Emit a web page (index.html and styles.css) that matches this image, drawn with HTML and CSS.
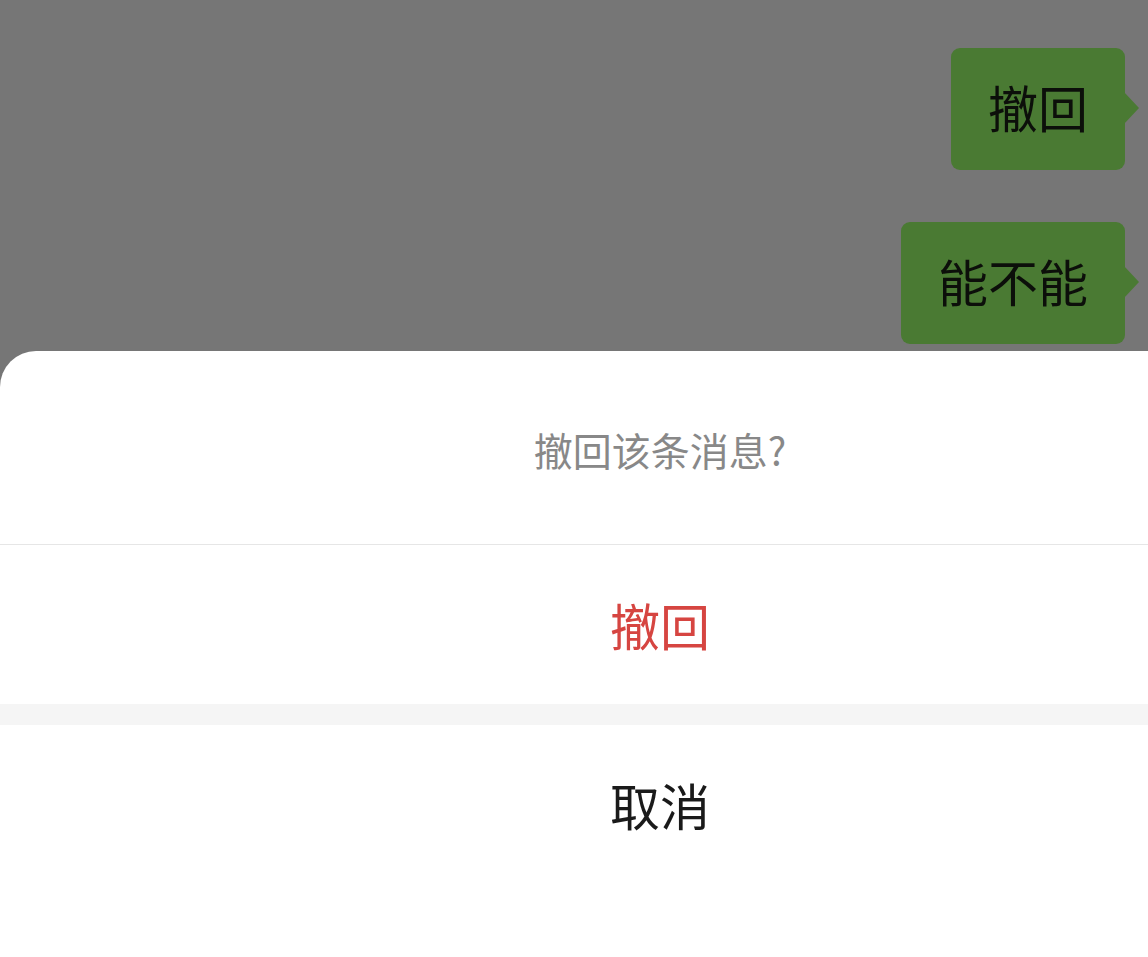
FILE: index.html
```html
<!DOCTYPE html>
<html lang="zh-CN">
<head>
<meta charset="utf-8">
<title>撤回该条消息</title>
<link rel="stylesheet" href="styles.css">
</head>
<body>
<div class="screen">
  <div class="chat">
    <div class="msg">
      <div class="bubble">撤回</div>
    </div>
    <div class="msg">
      <div class="bubble">能不能</div>
    </div>
  </div>
  <div class="sheet">
    <div class="title">撤回该条消息?</div>
    <div class="action danger">撤回</div>
    <div class="spacer"></div>
    <div class="action cancel">取消</div>
  </div>
</div>
</body>
</html>
```
FILE: styles.css
```css
* { box-sizing: border-box; }
html, body {
  margin: 0;
  padding: 0;
}
body {
  width: 1148px;
  height: 957px;
  overflow: hidden;
  background: #767676;
  font-family: "Noto Sans CJK SC", "Noto Sans", sans-serif;
}
.screen {
  width: 1148px;
  height: 957px;
  display: flex;
  flex-direction: column;
}
.chat {
  height: 351px;
  padding: 48px 23px 0 0;
  display: flex;
  flex-direction: column;
  align-items: flex-end;
  gap: 52px;
}
.msg {
  display: flex;
}
.bubble {
  position: relative;
  height: 122px;
  background: #4a7a33;
  border-radius: 9px;
  color: #0c0f0a;
  font-size: 50px;
  line-height: 116px;
  padding: 0 37px 6px 37px;
}
.bubble::after {
  content: "";
  position: absolute;
  right: -14px;
  top: 44px;
  width: 0;
  height: 0;
  border-top: 16px solid transparent;
  border-bottom: 16px solid transparent;
  border-left: 15px solid #4a7a33;
}
.sheet {
  flex: 1;
  width: 1148px;
  background: #ffffff;
  border-radius: 36px 0 0 0;
  display: flex;
  flex-direction: column;
}
.title {
  height: 194px;
  border-bottom: 1px solid #e6e6e6;
  display: flex;
  align-items: center;
  justify-content: center;
  padding: 2px 0 0 172px;
  font-size: 39px;
  color: #888888;
}
.action {
  display: flex;
  align-items: center;
  justify-content: center;
  font-size: 50px;
  padding-left: 172px;
}
.danger {
  height: 159px;
  color: #d64541;
  padding-bottom: 2px;
}
.spacer {
  height: 21px;
  background: #f5f5f5;
}
.cancel {
  height: 162px;
  color: #1a1a1a;
  padding-bottom: 4px;
}
```
